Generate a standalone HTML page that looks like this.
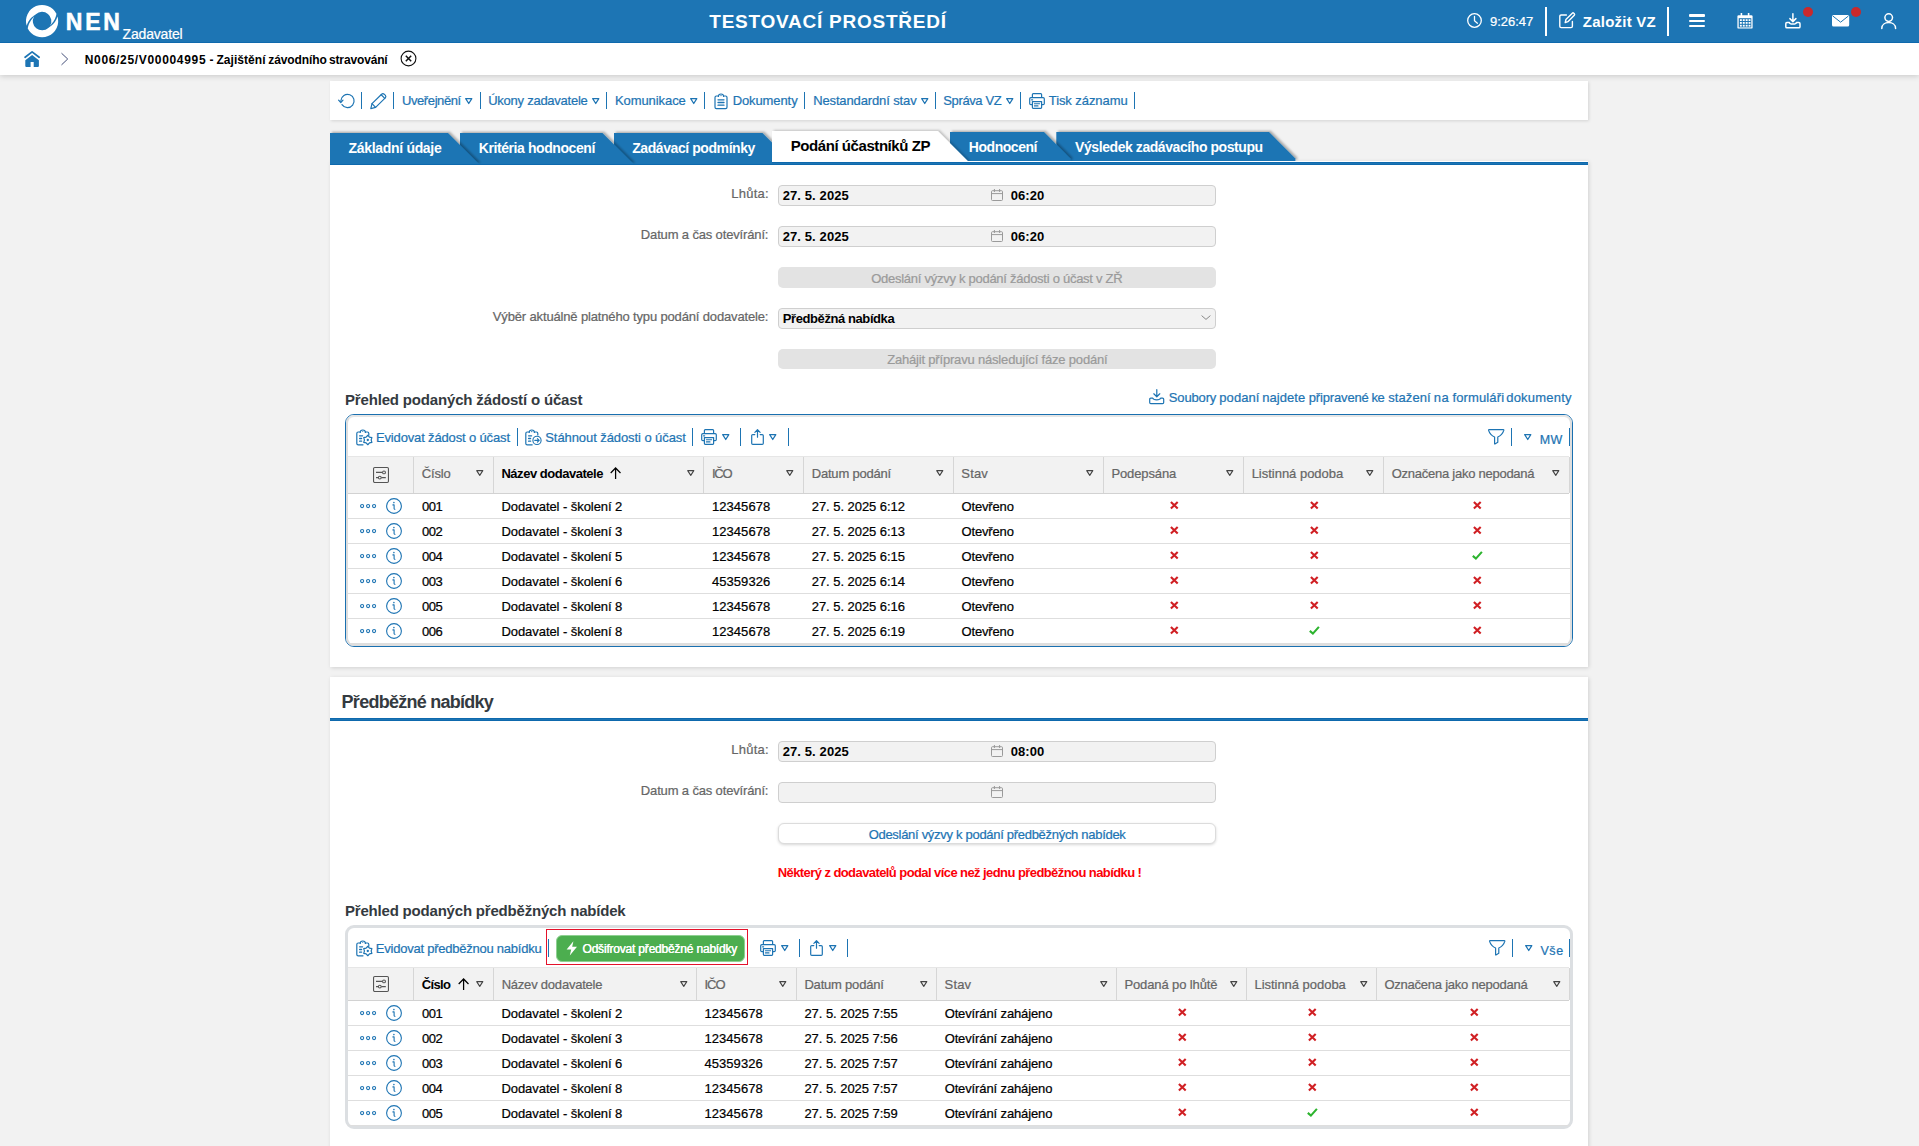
<!DOCTYPE html>
<html lang="cs"><head><meta charset="utf-8"><title>NEN - Zadavatel</title>
<style>
html,body{margin:0;padding:0;}
body{width:1919px;height:1146px;overflow:hidden;background:#f2f2f2;font-family:"Liberation Sans", sans-serif;position:relative;}
.t{position:absolute;white-space:pre;line-height:1;font-weight:400;font-family:"Liberation Sans", sans-serif;-webkit-text-stroke:0.22px currentColor;}
.b{font-weight:700;-webkit-text-stroke:0;}
</style></head><body>
<div style="position:absolute;left:0px;top:0px;width:1919px;height:43px;background:#1d75b4;"></div>
<div style="position:absolute;left:0px;top:42px;width:1919px;height:1px;background:#0e69ad;"></div>
<svg style="position:absolute;left:25.9px;top:4.8px;overflow:visible;" width="32.2" height="32.2" viewBox="0 0 32.2 32.2"><g transform="translate(16.1,16.1)" fill="#fff"><path d="M-15.40,4.71 A16.1,16.1 0 0 1 14.35,-7.31 L14.09,-5.96 L13.75,-4.70 L13.36,-3.53 L12.91,-2.44 L12.42,-1.45 L11.91,-0.54 L11.39,0.30 L10.86,1.06 L10.33,1.76 L9.82,2.40 L9.33,2.99 L8.86,3.55 L8.43,4.10 L8.05,4.65 A9.3,9.3 0 0 0 -6.22,-6.91 L-6.82,-6.44 L-7.45,-5.97 L-8.11,-5.49 L-8.80,-4.97 L-9.52,-4.39 L-10.24,-3.76 L-10.98,-3.04 L-11.71,-2.25 L-12.44,-1.35 L-13.13,-0.36 L-13.79,0.74 L-14.40,1.95 L-14.94,3.27 L-15.40,4.71 Z"/><path transform="rotate(180)" d="M-15.40,4.71 A16.1,16.1 0 0 1 14.35,-7.31 L14.09,-5.96 L13.75,-4.70 L13.36,-3.53 L12.91,-2.44 L12.42,-1.45 L11.91,-0.54 L11.39,0.30 L10.86,1.06 L10.33,1.76 L9.82,2.40 L9.33,2.99 L8.86,3.55 L8.43,4.10 L8.05,4.65 A9.3,9.3 0 0 0 -6.22,-6.91 L-6.82,-6.44 L-7.45,-5.97 L-8.11,-5.49 L-8.80,-4.97 L-9.52,-4.39 L-10.24,-3.76 L-10.98,-3.04 L-11.71,-2.25 L-12.44,-1.35 L-13.13,-0.36 L-13.79,0.74 L-14.40,1.95 L-14.94,3.27 L-15.40,4.71 Z"/></g></svg>
<span class="t b" style="left:65.75px;top:10.53px;font-size:23px;color:#fff;letter-spacing:2.769px;-webkit-text-stroke:0.55px #fff;">NEN</span>
<span class="t" style="left:122.50px;top:26.85px;font-size:14px;color:#fff;letter-spacing:-0.161px;">Zadavatel</span>
<span class="t b" style="left:709.35px;top:11.72px;font-size:19px;color:#fff;letter-spacing:0.749px;">TESTOVACÍ PROSTŘEDÍ</span>
<svg style="position:absolute;left:1467px;top:13.3px;overflow:visible;" width="15" height="15" viewBox="0 0 15 15"><circle cx="7.5" cy="7.5" r="6.8" fill="none" stroke="#fff" stroke-width="1.3"/><path d="M7.5,3.4 V7.8 L10.4,10.2" fill="none" stroke="#fff" stroke-width="1.3" stroke-linecap="round"/></svg>
<span class="t" style="left:1490.05px;top:15.00px;font-size:13px;color:#fff;letter-spacing:-0.046px;">9:26:47</span>
<div style="position:absolute;left:1545px;top:7px;width:2px;height:29px;background:#fff;"></div>
<svg style="position:absolute;left:1559.4px;top:12.4px;overflow:visible;" width="16.4" height="16.4" viewBox="0 0 16.4 16.4"><g fill="none" stroke="#fff" stroke-width="1.4" stroke-linecap="round" stroke-linejoin="round"><path d="M7.4,3 H2.2 Q0.8,3 0.8,4.4 V14.2 Q0.8,15.6 2.2,15.6 H12 Q13.4,15.6 13.4,14.2 V9.4"/><path d="M6.2,10.6 L6.9,7.6 L13.3,1.2 Q14,0.5 14.8,1.2 L15.3,1.7 Q16,2.5 15.3,3.2 L8.9,9.7 Z"/></g></svg>
<span class="t b" style="left:1582.85px;top:14.20px;font-size:15px;color:#fff;letter-spacing:0.228px;">Založit VZ</span>
<div style="position:absolute;left:1667px;top:7px;width:2px;height:29px;background:#fff;"></div>
<div style="position:absolute;left:1689px;top:14.3px;width:16px;height:2.6px;background:#fff;border-radius:1px;"></div>
<div style="position:absolute;left:1689px;top:19.5px;width:16px;height:2.6px;background:#fff;border-radius:1px;"></div>
<div style="position:absolute;left:1689px;top:24.7px;width:16px;height:2.6px;background:#fff;border-radius:1px;"></div>
<svg style="position:absolute;left:1736.8px;top:13px;overflow:visible;" width="16" height="16" viewBox="0 0 16 16"><path d="M1.6,2.2 H14.4 Q15.6,2.2 15.6,3.4 V14.4 Q15.6,15.6 14.4,15.6 H1.6 Q0.4,15.6 0.4,14.4 V3.4 Q0.4,2.2 1.6,2.2 Z" fill="#fff"/><rect x="3.6" y="0" width="1.6" height="4" fill="#fff"/><rect x="10.8" y="0" width="1.6" height="4" fill="#fff"/><rect x="1.7" y="5.2" width="12.6" height="9.2" fill="#1d75b4"/><g fill="#fff"><rect x="2.9" y="6.2" width="1.9" height="1.8"/><rect x="2.9" y="9.0" width="1.9" height="1.8"/><rect x="2.9" y="11.8" width="1.9" height="1.8"/><rect x="5.8" y="6.2" width="1.9" height="1.8"/><rect x="5.8" y="9.0" width="1.9" height="1.8"/><rect x="5.8" y="11.8" width="1.9" height="1.8"/><rect x="8.7" y="6.2" width="1.9" height="1.8"/><rect x="8.7" y="9.0" width="1.9" height="1.8"/><rect x="8.7" y="11.8" width="1.9" height="1.8"/><rect x="11.6" y="6.2" width="1.9" height="1.8"/><rect x="11.6" y="9.0" width="1.9" height="1.8"/><rect x="11.6" y="11.8" width="1.9" height="1.8"/></g><rect x="3.9" y="1.2" width="1" height="2.2" fill="#1d75b4" opacity="0"/></svg>
<svg style="position:absolute;left:1784.8px;top:13px;overflow:visible;" width="15.8" height="15.6" viewBox="0 0 15.8 15.6"><g fill="none" stroke="#fff" stroke-width="1.5" stroke-linecap="round" stroke-linejoin="round"><path d="M7.9,0.8 V8.4 M4.9,5.6 L7.9,8.6 L10.9,5.6"/><path d="M4.4,9.6 H1.9 Q0.8,9.6 0.8,10.7 V13.7 Q0.8,14.8 1.9,14.8 H13.9 Q15,14.8 15,13.7 V10.7 Q15,9.6 13.9,9.6 H11.4 C11,11.6 4.8,11.6 4.4,9.6 Z"/></g></svg>
<div style="position:absolute;left:1803px;top:7px;width:10px;height:10px;background:#c9292c;border-radius:50%;"></div>
<svg style="position:absolute;left:1832px;top:15.2px;overflow:visible;" width="17.2" height="11.6" viewBox="0 0 17.2 11.6"><rect x="0" y="0" width="17.2" height="11.6" rx="1.6" fill="#fff"/><path d="M0.8,1 L8.6,7.2 L16.4,1" fill="none" stroke="#1d75b4" stroke-width="1"/></svg>
<div style="position:absolute;left:1850.8px;top:7px;width:10px;height:10px;background:#c9292c;border-radius:50%;"></div>
<svg style="position:absolute;left:1880.8px;top:13px;overflow:visible;" width="15.4" height="16" viewBox="0 0 15.4 16"><g fill="none" stroke="#fff" stroke-width="1.5" stroke-linecap="round"><circle cx="7.7" cy="4.6" r="3.8"/><path d="M0.8,15.4 C0.8,7.6 14.6,7.6 14.6,15.4"/></g></svg>
<div style="position:absolute;left:0px;top:43px;width:1919px;height:32px;background:#fff;box-shadow:0 1px 6px rgba(0,0,0,.18);clip-path:inset(0 0 -14px 0);"></div>
<svg style="position:absolute;left:23px;top:50px;overflow:visible;" width="18" height="18" viewBox="0 0 18 18"><path d="M2.1,7.2 L9.1,1.9 L16.1,7.2" fill="none" stroke="#1d75b4" stroke-width="1.8" stroke-linecap="round" stroke-linejoin="round"/><path d="M9.1,4.9 L15.9,10.3 V15.9 Q15.9,16.9 14.9,16.9 H10.7 V12 H7.6 V16.9 H3.3 Q2.3,16.9 2.3,15.9 V10.3 Z" fill="#1d75b4"/></svg>
<svg style="position:absolute;left:60px;top:52px;overflow:visible;" width="10" height="14" viewBox="0 0 10 14"><path d="M1.5,1.2 L7.7,7 L1.5,12.9" fill="none" stroke="#3a4672" stroke-width="0.95"/></svg>
<span class="t b" style="left:84.70px;top:53.54px;font-size:12px;color:#000;letter-spacing:0.674px;">N006/25/V00004995</span>
<span class="t b" style="left:209.60px;top:53.54px;font-size:12px;color:#000;letter-spacing:1.200px;">-</span>
<span class="t b" style="left:216.40px;top:53.54px;font-size:12px;color:#000;letter-spacing:0.064px;">Zajištění</span>
<span class="t b" style="left:268.30px;top:53.54px;font-size:12px;color:#000;letter-spacing:-0.093px;">závodního</span>
<span class="t b" style="left:329.00px;top:53.54px;font-size:12px;color:#000;letter-spacing:-0.148px;">stravování</span>
<svg style="position:absolute;left:400.4px;top:50.45px;overflow:visible;" width="17" height="17" viewBox="0 0 17 17"><circle cx="8.5" cy="8.5" r="7.4" fill="none" stroke="#111" stroke-width="1.1"/><path d="M5.8,5.8 L11.2,11.2 M11.2,5.8 L5.8,11.2" stroke="#111" stroke-width="1.5" fill="none"/></svg>
<div style="position:absolute;left:330px;top:81px;width:1258px;height:39px;background:#fff;box-shadow:1px 1px 3px rgba(0,0,0,.13);"></div>
<svg style="position:absolute;left:338px;top:93px;overflow:visible;" width="16.5" height="15.5" viewBox="0 0 16.5 15.5"><g fill="none" stroke="#1d74b3" stroke-width="1.2" stroke-linecap="round" stroke-linejoin="round"><path d="M2.9,7.6 A6.6,6.6 0 1 1 4,11.6"/><path d="M0.6,7.2 L2.8,9.5 L5,7.2"/></g></svg>
<div style="position:absolute;left:361px;top:92px;width:1px;height:17px;background:#1d74b3;"></div>
<svg style="position:absolute;left:370px;top:92.8px;overflow:visible;" width="16.6" height="16.4" viewBox="0 0 16.6 16.4"><g fill="none" stroke="#1d74b3" stroke-width="1.2" stroke-linecap="round" stroke-linejoin="round"><path d="M0.8,15.6 L2,10.6 L11.6,1.2 Q12.9,0.1 14.2,1.2 L15.4,2.4 Q16.4,3.7 15.3,4.9 L5.6,14.4 Z"/><path d="M2,10.6 L5.6,14.4 M11.2,1.8 L14.8,5.4"/></g></svg>
<div style="position:absolute;left:393px;top:92px;width:1px;height:17px;background:#1d74b3;"></div>
<span class="t" style="left:401.95px;top:93.60px;font-size:13px;color:#1d74b3;letter-spacing:-0.397px;">Uveřejnění</span>
<svg style="position:absolute;left:465.3px;top:97.6px;overflow:visible;" width="7.5" height="6.1" viewBox="0 0 7.5 6.1"><path d="M0.7,0.6 H6.8 L3.75,5.5 Z" fill="none" stroke="#1d74b3" stroke-width="1.25" stroke-linejoin="round"/></svg>
<div style="position:absolute;left:480px;top:92px;width:1px;height:17px;background:#1d74b3;"></div>
<span class="t" style="left:488.15px;top:93.60px;font-size:13px;color:#1d74b3;letter-spacing:-0.243px;">Úkony zadavatele</span>
<svg style="position:absolute;left:591.6px;top:97.6px;overflow:visible;" width="7.5" height="6.1" viewBox="0 0 7.5 6.1"><path d="M0.7,0.6 H6.8 L3.75,5.5 Z" fill="none" stroke="#1d74b3" stroke-width="1.25" stroke-linejoin="round"/></svg>
<div style="position:absolute;left:606px;top:92px;width:1px;height:17px;background:#1d74b3;"></div>
<span class="t" style="left:614.95px;top:93.60px;font-size:13px;color:#1d74b3;letter-spacing:-0.072px;">Komunikace</span>
<svg style="position:absolute;left:689.5px;top:97.6px;overflow:visible;" width="7.5" height="6.1" viewBox="0 0 7.5 6.1"><path d="M0.7,0.6 H6.8 L3.75,5.5 Z" fill="none" stroke="#1d74b3" stroke-width="1.25" stroke-linejoin="round"/></svg>
<div style="position:absolute;left:704px;top:92px;width:1px;height:17px;background:#1d74b3;"></div>
<svg style="position:absolute;left:714.4px;top:92.8px;overflow:visible;" width="14" height="16" viewBox="0 0 14 16"><g fill="none" stroke="#1d74b3" stroke-width="1.2" stroke-linecap="round" stroke-linejoin="round"><path d="M4.4,3 H2.4 Q1,3 1,4.4 V14.2 Q1,15.6 2.4,15.6 H11.6 Q13,15.6 13,14.2 V4.4 Q13,3 11.6,3 H9.6"/><path d="M4.4,3.4 C4.4,0.2 9.6,0.2 9.6,3.4"/><path d="M4,6.8 H10 M4,9.5 H10 M4,12.2 H10" stroke-width="1.3"/></g><circle cx="7" cy="2.6" r="0.7" fill="#1d74b3"/></svg>
<span class="t" style="left:732.65px;top:93.60px;font-size:13px;color:#1d74b3;letter-spacing:-0.094px;">Dokumenty</span>
<div style="position:absolute;left:804px;top:92px;width:1px;height:17px;background:#1d74b3;"></div>
<span class="t" style="left:813.15px;top:93.60px;font-size:13px;color:#1d74b3;letter-spacing:-0.126px;">Nestandardní stav</span>
<svg style="position:absolute;left:920.6px;top:97.6px;overflow:visible;" width="7.5" height="6.1" viewBox="0 0 7.5 6.1"><path d="M0.7,0.6 H6.8 L3.75,5.5 Z" fill="none" stroke="#1d74b3" stroke-width="1.25" stroke-linejoin="round"/></svg>
<div style="position:absolute;left:935px;top:92px;width:1px;height:17px;background:#1d74b3;"></div>
<span class="t" style="left:943.35px;top:93.60px;font-size:13px;color:#1d74b3;letter-spacing:-0.390px;">Správa VZ</span>
<svg style="position:absolute;left:1005.8px;top:97.6px;overflow:visible;" width="7.5" height="6.1" viewBox="0 0 7.5 6.1"><path d="M0.7,0.6 H6.8 L3.75,5.5 Z" fill="none" stroke="#1d74b3" stroke-width="1.25" stroke-linejoin="round"/></svg>
<div style="position:absolute;left:1020px;top:92px;width:1px;height:17px;background:#1d74b3;"></div>
<svg style="position:absolute;left:1029.2px;top:92.7px;overflow:visible;" width="16" height="16" viewBox="0 0 16 16"><g fill="none" stroke="#1d74b3" stroke-width="1.2" stroke-linejoin="round" stroke-linecap="round"><path d="M3.4,4.4 V1.6 Q3.4,0.7 4.3,0.7 H11.7 Q12.6,0.7 12.6,1.6 V4.4"/><path d="M3.4,11.6 H1.9 Q0.7,11.6 0.7,10.4 V5.8 Q0.7,4.6 1.9,4.6 H14.1 Q15.3,4.6 15.3,5.8 V10.4 Q15.3,11.6 14.1,11.6 H12.6"/><path d="M3.4,8.6 H12.6 V14.6 Q12.6,15.4 11.8,15.4 H4.2 Q3.4,15.4 3.4,14.6 Z"/><path d="M5.4,10.8 H10.6 M5.4,12.9 H9" stroke-width="1.1"/><path d="M2.6,6.8 H3.6" stroke-width="1.2"/></g></svg>
<span class="t" style="left:1048.75px;top:93.60px;font-size:13px;color:#1d74b3;letter-spacing:-0.074px;">Tisk záznamu</span>
<div style="position:absolute;left:1134px;top:92px;width:1px;height:17px;background:#1d74b3;"></div>
<div style="position:absolute;left:330px;top:161px;width:1258px;height:506px;background:#fff;box-shadow:1px 1px 4px rgba(0,0,0,.14);"></div>
<div style="position:absolute;left:330px;top:162px;width:1258px;height:3px;background:linear-gradient(#0e69ad 0 1px,#1d75b4 1px 2px,#0e69ad 2px 3px);"></div>
<svg style="position:absolute;left:0;top:0;overflow:hidden" width="1919" height="164" viewBox="0 0 1919 164"><defs><filter id="tsh" x="-5%" y="-30%" width="115%" height="160%"><feDropShadow dx="1.8" dy="-1.2" stdDeviation="1.1" flood-color="#000" flood-opacity="0.3"/></filter><filter id="tsw" x="-5%" y="-30%" width="115%" height="160%"><feDropShadow dx="1.8" dy="-1.0" stdDeviation="1.2" flood-color="#000" flood-opacity="0.2"/></filter></defs><path d="M1056.3,132 H1269 L1295.4,158.4 V161 H1056.3 Z" fill="#1d75b4" filter="url(#tsh)"/><path d="M950,132 H1044 L1070.4,158.4 V161 H950 Z" fill="#1d75b4" filter="url(#tsh)"/><path d="M614,133 H762.5 L793.5,164 V164 H614 Z" fill="#1d75b4" filter="url(#tsh)"/><path d="M460,133 H602.5 L633.5,164 V164 H460 Z" fill="#1d75b4" filter="url(#tsh)"/><path d="M330,133 H448 L479,164 V164 H330 Z" fill="#1d75b4" filter="url(#tsh)"/><path d="M772,131 H937.8 L967.8,161 V162 H772 Z" fill="#fff" filter="url(#tsw)"/></svg>
<div style="position:absolute;left:950px;top:161px;width:346px;height:1px;background:#fff;"></div>
<div style="position:absolute;left:772px;top:162px;width:816px;height:3px;background:linear-gradient(#0e69ad 0 1px,#1d75b4 1px 2px,#0e69ad 2px 3px);"></div>
<span class="t b" style="left:348.60px;top:141.25px;font-size:14px;color:#fff;letter-spacing:-0.319px;">Základní údaje</span>
<span class="t b" style="left:478.80px;top:141.25px;font-size:14px;color:#fff;letter-spacing:-0.423px;">Kritéria hodnocení</span>
<span class="t b" style="left:632.20px;top:141.25px;font-size:14px;color:#fff;letter-spacing:-0.421px;">Zadávací podmínky</span>
<span class="t b" style="left:790.75px;top:138.20px;font-size:15px;color:#000;letter-spacing:-0.435px;">Podání účastníků ZP</span>
<span class="t b" style="left:968.80px;top:140.45px;font-size:14px;color:#fff;letter-spacing:-0.455px;">Hodnocení</span>
<span class="t b" style="left:1075.10px;top:140.45px;font-size:14px;color:#fff;letter-spacing:-0.430px;">Výsledek zadávacího postupu</span>
<span class="t" style="left:731.15px;top:187.20px;font-size:13px;color:#666;letter-spacing:0.269px;">Lhůta:</span>
<div style="position:absolute;left:778px;top:185px;width:438px;height:21px;background:#f2f2f2;border:1px solid #cfcfcf;border-radius:4px;box-sizing:border-box;"></div><svg style="position:absolute;left:991px;top:189.3px;overflow:visible;" width="12" height="12" viewBox="0 0 12 12"><g fill="none" stroke="#9a9a9a" stroke-width="1"><rect x="0.5" y="1.7" width="11" height="9.8" rx="1"/><path d="M0.5,4.6 H11.5 M3.4,0 V3 M8.6,0 V3"/></g></svg><span class="t b" style="left:782.65px;top:189.00px;font-size:13px;color:#000;letter-spacing:0.114px;">27. 5. 2025</span><span class="t b" style="left:1010.75px;top:189.00px;font-size:13px;color:#000;letter-spacing:0.062px;">06:20</span>
<span class="t" style="left:640.85px;top:228.20px;font-size:13px;color:#666;letter-spacing:-0.151px;">Datum a čas otevírání:</span>
<div style="position:absolute;left:778px;top:226px;width:438px;height:21px;background:#f2f2f2;border:1px solid #cfcfcf;border-radius:4px;box-sizing:border-box;"></div><svg style="position:absolute;left:991px;top:230.3px;overflow:visible;" width="12" height="12" viewBox="0 0 12 12"><g fill="none" stroke="#9a9a9a" stroke-width="1"><rect x="0.5" y="1.7" width="11" height="9.8" rx="1"/><path d="M0.5,4.6 H11.5 M3.4,0 V3 M8.6,0 V3"/></g></svg><span class="t b" style="left:782.65px;top:230.00px;font-size:13px;color:#000;letter-spacing:0.114px;">27. 5. 2025</span><span class="t b" style="left:1010.75px;top:230.00px;font-size:13px;color:#000;letter-spacing:0.062px;">06:20</span>
<div style="position:absolute;left:778px;top:267px;width:438px;height:21px;background:#e3e3e3;border-radius:5px;"></div>
<span class="t" style="left:871.25px;top:272.10px;font-size:13px;color:#9a9a9a;letter-spacing:-0.270px;">Odeslání výzvy k podání žádosti o účast v ZŘ</span>
<span class="t" style="left:492.85px;top:310.20px;font-size:13px;color:#666;letter-spacing:-0.152px;">Výběr aktuálně platného typu podání dodavatele:</span>
<div style="position:absolute;left:778px;top:308px;width:438px;height:21px;background:#f2f2f2;border:1px solid #cfcfcf;border-radius:4px;box-sizing:border-box;"></div>
<span class="t b" style="left:782.85px;top:311.80px;font-size:13px;color:#000;letter-spacing:-0.418px;">Předběžná nabídka</span>
<svg style="position:absolute;left:1200.5px;top:315.4px;overflow:visible;" width="10" height="5.4" viewBox="0 0 10 5.4"><path d="M0.6,0.6 L5,4.4 L9.4,0.6" fill="none" stroke="#888" stroke-width="1"/></svg>
<div style="position:absolute;left:778px;top:349px;width:438px;height:20px;background:#e3e3e3;border-radius:5px;"></div>
<span class="t" style="left:887.15px;top:353.00px;font-size:13px;color:#9a9a9a;letter-spacing:-0.183px;">Zahájit přípravu následující fáze podání</span>
<span class="t b" style="left:344.95px;top:392.00px;font-size:15px;color:#343a40;letter-spacing:-0.163px;">Přehled podaných žádostí o účast</span>
<svg style="position:absolute;left:1149.3px;top:389.2px;overflow:visible;" width="15.4" height="15.2" viewBox="0 0 15.4 15.2"><g fill="none" stroke="#1d74b3" stroke-width="1.2" stroke-linecap="round" stroke-linejoin="round"><path d="M7.8,0.6 V7.4 M4.8,4.8 L7.8,7.8 L10.8,4.8"/><path d="M3.8,9.2 H1.8 Q0.7,9.2 0.7,10.3 V13.5 Q0.7,14.6 1.8,14.6 H13.6 Q14.7,14.6 14.7,13.5 V10.3 Q14.7,9.2 13.6,9.2 H11.6 C11,11.4 4.4,11.4 3.8,9.2 Z"/></g></svg>
<span class="t" style="left:1168.85px;top:391.00px;font-size:13px;color:#1d74b3;letter-spacing:-0.154px;">Soubory</span>
<span class="t" style="left:1219.25px;top:391.00px;font-size:13px;color:#1d74b3;letter-spacing:0.087px;">podaní</span>
<span class="t" style="left:1262.15px;top:391.00px;font-size:13px;color:#1d74b3;letter-spacing:0.074px;">najdete</span>
<span class="t" style="left:1308.65px;top:391.00px;font-size:13px;color:#1d74b3;letter-spacing:-0.137px;">připravené</span>
<span class="t" style="left:1371.55px;top:391.00px;font-size:13px;color:#1d74b3;letter-spacing:-0.434px;">ke</span>
<span class="t" style="left:1388.15px;top:391.00px;font-size:13px;color:#1d74b3;letter-spacing:0.113px;">stažení</span>
<span class="t" style="left:1433.65px;top:391.00px;font-size:13px;color:#1d74b3;letter-spacing:0.531px;">na</span>
<span class="t" style="left:1452.45px;top:391.00px;font-size:13px;color:#1d74b3;letter-spacing:0.128px;">formuláři</span>
<span class="t" style="left:1506.25px;top:391.00px;font-size:13px;color:#1d74b3;letter-spacing:0.201px;">dokumenty</span>
<div style="position:absolute;left:345px;top:414px;width:1228px;height:233px;border:1px solid #1a70b0;border-radius:9px;box-sizing:border-box;background:#fff;"></div><div style="position:absolute;left:346px;top:415px;width:1226px;height:231px;border:2px solid #dedede;border-top-color:#e6e6e6;border-radius:8px;box-sizing:border-box;"></div><svg style="position:absolute;left:356px;top:429px;overflow:visible;" width="16" height="16" viewBox="0 0 16 16"><g fill="none" stroke="#1d74b3" stroke-width="1.2" stroke-linecap="round" stroke-linejoin="round"><path d="M4.2,3 H2.2 Q0.8,3 0.8,4.4 V14.4 Q0.8,15.8 2.2,15.8 H7"/><path d="M9.4,3 H11.4 Q12.8,3 12.8,4.4 V6.2"/><path d="M4.2,3.4 C4.2,0.2 9.4,0.2 9.4,3.4"/><path d="M3.6,6.8 H6.6 M3.6,9.5 H5.6 M3.6,12.2 H5.6" stroke-width="1.3"/><path d="M11.80,6.25 L13.48,8.10 L15.91,8.62 L15.15,11.00 L15.91,13.38 L13.48,13.90 L11.80,15.75 L10.13,13.90 L7.69,13.38 L8.45,11.00 L7.69,8.62 L10.12,8.10 Z" stroke-width="1.15"/></g><circle cx="6.8" cy="2.5" r="0.55" fill="#1d74b3"/><circle cx="11.8" cy="11" r="1.15" fill="#1d74b3"/></svg><span class="t" style="left:375.95px;top:430.90px;font-size:13px;color:#1d74b3;letter-spacing:-0.146px;">Evidovat žádost o účast</span><div style="position:absolute;left:517px;top:428px;width:1px;height:18px;background:#1d74b3;"></div><svg style="position:absolute;left:525.4px;top:429px;overflow:visible;" width="17" height="16" viewBox="0 0 17 16"><g fill="none" stroke="#1d74b3" stroke-width="1.2" stroke-linecap="round" stroke-linejoin="round"><path d="M4.2,3 H2.2 Q0.8,3 0.8,4.4 V14.4 Q0.8,15.8 2.2,15.8 H7.2"/><path d="M9.4,3 H11.4 Q12.8,3 12.8,4.4 V6"/><path d="M4.2,3.4 C4.2,0.2 9.4,0.2 9.4,3.4"/><path d="M3.6,6.8 H6.6 M3.6,9.5 H5.6 M3.6,12.2 H5.6" stroke-width="1.3"/><circle cx="12" cy="11.4" r="4.1" stroke-width="1.1"/><path d="M9.8,11.4 H14 M12.4,9.6 L14.2,11.4 L12.4,13.2" stroke-width="1.1"/></g><circle cx="6.8" cy="2.6" r="0.7" fill="#1d74b3"/></svg><span class="t" style="left:545.25px;top:430.90px;font-size:13px;color:#1d74b3;letter-spacing:-0.077px;">Stáhnout žádosti o účast</span><div style="position:absolute;left:692px;top:428px;width:1px;height:18px;background:#1d74b3;"></div><svg style="position:absolute;left:701.4px;top:428.7px;overflow:visible;" width="16" height="16" viewBox="0 0 16 16"><g fill="none" stroke="#1d74b3" stroke-width="1.2" stroke-linejoin="round" stroke-linecap="round"><path d="M3.4,4.4 V1.6 Q3.4,0.7 4.3,0.7 H11.7 Q12.6,0.7 12.6,1.6 V4.4"/><path d="M3.4,11.6 H1.9 Q0.7,11.6 0.7,10.4 V5.8 Q0.7,4.6 1.9,4.6 H14.1 Q15.3,4.6 15.3,5.8 V10.4 Q15.3,11.6 14.1,11.6 H12.6"/><path d="M3.4,8.6 H12.6 V14.6 Q12.6,15.4 11.8,15.4 H4.2 Q3.4,15.4 3.4,14.6 Z"/><path d="M5.4,10.8 H10.6 M5.4,12.9 H9" stroke-width="1.1"/><path d="M2.6,6.8 H3.6" stroke-width="1.2"/></g></svg><svg style="position:absolute;left:721.5px;top:434.3px;overflow:visible;" width="7.5" height="6.1" viewBox="0 0 7.5 6.1"><path d="M0.7,0.6 H6.8 L3.75,5.5 Z" fill="none" stroke="#1d74b3" stroke-width="1.25" stroke-linejoin="round"/></svg><div style="position:absolute;left:740px;top:428px;width:1px;height:18px;background:#1d74b3;"></div><svg style="position:absolute;left:751px;top:428.7px;overflow:visible;" width="13" height="16" viewBox="0 0 13 16"><g fill="none" stroke="#1d74b3" stroke-width="1.2" stroke-linejoin="round" stroke-linecap="round"><path d="M3.8,5.6 H1.8 Q0.7,5.6 0.7,6.7 V14.3 Q0.7,15.4 1.8,15.4 H11.2 Q12.3,15.4 12.3,14.3 V6.7 Q12.3,5.6 11.2,5.6 H9.2"/><path d="M6.5,8.2 V0.8 M3.9,3.3 L6.5,0.7 L9.1,3.3"/></g></svg><svg style="position:absolute;left:769.4px;top:434.3px;overflow:visible;" width="7.5" height="6.1" viewBox="0 0 7.5 6.1"><path d="M0.7,0.6 H6.8 L3.75,5.5 Z" fill="none" stroke="#1d74b3" stroke-width="1.25" stroke-linejoin="round"/></svg><div style="position:absolute;left:788px;top:428px;width:1px;height:18px;background:#1d74b3;"></div><svg style="position:absolute;left:1487.7px;top:429px;overflow:visible;" width="16.4" height="15.6" viewBox="0 0 16.4 15.6"><path d="M1,0.7 H15.4 Q16,0.7 15.8,1.4 C14.6,5.2 12.4,7 9.8,8 V13.2 L6.9,15 Q6.6,15.1 6.6,14.7 V8 C4,7 1.8,5.2 0.6,1.4 Q0.4,0.7 1,0.7 Z" fill="none" stroke="#1d74b3" stroke-width="1.2" stroke-linejoin="round"/></svg><div style="position:absolute;left:1511px;top:428px;width:1px;height:18px;background:#1d74b3;"></div><svg style="position:absolute;left:1524px;top:434.3px;overflow:visible;" width="7.5" height="6.1" viewBox="0 0 7.5 6.1"><path d="M0.7,0.6 H6.8 L3.75,5.5 Z" fill="none" stroke="#1d74b3" stroke-width="1.25" stroke-linejoin="round"/></svg><span class="t" style="left:1539.67px;top:434.12px;font-size:12.5px;color:#1d74b3;letter-spacing:0.531px;">MW</span><div style="position:absolute;left:1569px;top:428px;width:1px;height:18px;background:#1d74b3;"></div><div style="position:absolute;left:348px;top:456px;width:1221px;height:1px;background:#e6e6e6;"></div><div style="position:absolute;left:348px;top:457px;width:1221px;height:36px;background:#f2f2f2;"></div><div style="position:absolute;left:348px;top:493px;width:1221px;height:1px;background:#d2d2d2;"></div><div style="position:absolute;left:413px;top:457px;width:1px;height:36px;background:#d6d6d6;"></div><div style="position:absolute;left:493px;top:457px;width:1px;height:36px;background:#d6d6d6;"></div><div style="position:absolute;left:703px;top:457px;width:1px;height:36px;background:#d6d6d6;"></div><div style="position:absolute;left:803px;top:457px;width:1px;height:36px;background:#d6d6d6;"></div><div style="position:absolute;left:953px;top:457px;width:1px;height:36px;background:#d6d6d6;"></div><div style="position:absolute;left:1103px;top:457px;width:1px;height:36px;background:#d6d6d6;"></div><div style="position:absolute;left:1243px;top:457px;width:1px;height:36px;background:#d6d6d6;"></div><div style="position:absolute;left:1383px;top:457px;width:1px;height:36px;background:#d6d6d6;"></div><div style="position:absolute;left:1569px;top:457px;width:1px;height:36px;background:#d6d6d6;"></div><svg style="position:absolute;left:373px;top:467.0px;overflow:visible;" width="16" height="16" viewBox="0 0 16 16"><g fill="none" stroke="#555" stroke-width="1.1"><rect x="0.55" y="0.55" width="14.9" height="14.9" rx="1.2"/><path d="M3,5.4 H9.6 M12.4,5.4 H12.8 M3,10.6 H5.4 M8.2,10.6 H12.8"/><circle cx="11" cy="5.4" r="1.4" fill="#fff"/><circle cx="6.8" cy="10.6" r="1.4" fill="#fff"/></g></svg><span class="t" style="left:421.85px;top:466.70px;font-size:13px;color:#666;letter-spacing:-0.206px;">Číslo</span><svg style="position:absolute;left:476.4px;top:470.0px;overflow:visible;" width="7.5" height="6" viewBox="0 0 7.5 6"><path d="M0.7,0.6 H6.8 L3.75,5.4 Z" fill="none" stroke="#444" stroke-width="1.1" stroke-linejoin="round"/></svg><span class="t b" style="left:501.45px;top:466.70px;font-size:13px;color:#000;letter-spacing:-0.474px;">Název dodavatele</span><svg style="position:absolute;left:609.8px;top:467.2px;overflow:visible;" width="11.2" height="12" viewBox="0 0 11.2 12"><path d="M5.6,12 V1 M0.7,6 L5.6,1 L10.5,6" fill="none" stroke="#000" stroke-width="1.25"/></svg><svg style="position:absolute;left:686.6px;top:470.0px;overflow:visible;" width="7.5" height="6" viewBox="0 0 7.5 6"><path d="M0.7,0.6 H6.8 L3.75,5.4 Z" fill="none" stroke="#444" stroke-width="1.1" stroke-linejoin="round"/></svg><span class="t" style="left:711.95px;top:466.70px;font-size:13px;color:#666;letter-spacing:-1.213px;">IČO</span><svg style="position:absolute;left:786.4px;top:470.0px;overflow:visible;" width="7.5" height="6" viewBox="0 0 7.5 6"><path d="M0.7,0.6 H6.8 L3.75,5.4 Z" fill="none" stroke="#444" stroke-width="1.1" stroke-linejoin="round"/></svg><span class="t" style="left:811.75px;top:466.70px;font-size:13px;color:#666;letter-spacing:-0.207px;">Datum podání</span><svg style="position:absolute;left:936.3px;top:470.0px;overflow:visible;" width="7.5" height="6" viewBox="0 0 7.5 6"><path d="M0.7,0.6 H6.8 L3.75,5.4 Z" fill="none" stroke="#444" stroke-width="1.1" stroke-linejoin="round"/></svg><span class="t" style="left:961.35px;top:466.70px;font-size:13px;color:#666;letter-spacing:0.161px;">Stav</span><svg style="position:absolute;left:1086.4px;top:470.0px;overflow:visible;" width="7.5" height="6" viewBox="0 0 7.5 6"><path d="M0.7,0.6 H6.8 L3.75,5.4 Z" fill="none" stroke="#444" stroke-width="1.1" stroke-linejoin="round"/></svg><span class="t" style="left:1111.45px;top:466.70px;font-size:13px;color:#666;letter-spacing:-0.123px;">Podepsána</span><svg style="position:absolute;left:1226.3px;top:470.0px;overflow:visible;" width="7.5" height="6" viewBox="0 0 7.5 6"><path d="M0.7,0.6 H6.8 L3.75,5.4 Z" fill="none" stroke="#444" stroke-width="1.1" stroke-linejoin="round"/></svg><span class="t" style="left:1251.65px;top:466.70px;font-size:13px;color:#666;letter-spacing:-0.015px;">Listinná podoba</span><svg style="position:absolute;left:1366.2px;top:470.0px;overflow:visible;" width="7.5" height="6" viewBox="0 0 7.5 6"><path d="M0.7,0.6 H6.8 L3.75,5.4 Z" fill="none" stroke="#444" stroke-width="1.1" stroke-linejoin="round"/></svg><span class="t" style="left:1391.75px;top:466.70px;font-size:13px;color:#666;letter-spacing:-0.257px;">Označena jako nepodaná</span><svg style="position:absolute;left:1552.4px;top:470.0px;overflow:visible;" width="7.5" height="6" viewBox="0 0 7.5 6"><path d="M0.7,0.6 H6.8 L3.75,5.4 Z" fill="none" stroke="#444" stroke-width="1.1" stroke-linejoin="round"/></svg><div style="position:absolute;left:348px;top:518px;width:1222px;height:1px;background:#dedede;"></div><svg style="position:absolute;left:360px;top:503.9px;overflow:visible;" width="16.2" height="4.2" viewBox="0 0 16.2 4.2"><circle cx="2.1" cy="2.1" r="1.55" fill="none" stroke="#1d74b3" stroke-width="1.1"/><circle cx="8.1" cy="2.1" r="1.55" fill="none" stroke="#1d74b3" stroke-width="1.1"/><circle cx="14.1" cy="2.1" r="1.55" fill="none" stroke="#1d74b3" stroke-width="1.1"/></svg><svg style="position:absolute;left:386px;top:498px;overflow:visible;" width="16" height="16" viewBox="0 0 16 16"><circle cx="8" cy="8" r="7.4" fill="none" stroke="#1d74b3" stroke-width="1.1"/><circle cx="7.9" cy="4.6" r="0.8" fill="#1d74b3"/><path d="M6.9,6.9 H8.1 V10.6 Q8.1,11.4 9,11.3" fill="none" stroke="#1d74b3" stroke-width="1.1" stroke-linecap="round" stroke-linejoin="round"/></svg><span class="t" style="left:421.95px;top:499.60px;font-size:13px;color:#000;letter-spacing:-0.502px;">001</span><span class="t" style="left:501.45px;top:499.60px;font-size:13px;color:#000;letter-spacing:-0.061px;">Dodavatel - školení 2</span><span class="t" style="left:711.95px;top:499.60px;font-size:13px;color:#000;letter-spacing:0.065px;">12345678</span><span class="t" style="left:811.75px;top:499.60px;font-size:13px;color:#000;letter-spacing:-0.046px;">27. 5. 2025 6:12</span><span class="t" style="left:961.45px;top:499.60px;font-size:13px;color:#000;letter-spacing:-0.141px;">Otevřeno</span><svg style="position:absolute;left:1170.1000000000001px;top:500.8px;overflow:visible;" width="8.6" height="8.4" viewBox="0 0 8.6 8.4"><path d="M0.9,0.9 L7.7,7.5 M7.7,0.9 L0.9,7.5" stroke="#d01f23" stroke-width="2.1" fill="none"/></svg><svg style="position:absolute;left:1310.1000000000001px;top:500.8px;overflow:visible;" width="8.6" height="8.4" viewBox="0 0 8.6 8.4"><path d="M0.9,0.9 L7.7,7.5 M7.7,0.9 L0.9,7.5" stroke="#d01f23" stroke-width="2.1" fill="none"/></svg><svg style="position:absolute;left:1473.1000000000001px;top:500.8px;overflow:visible;" width="8.6" height="8.4" viewBox="0 0 8.6 8.4"><path d="M0.9,0.9 L7.7,7.5 M7.7,0.9 L0.9,7.5" stroke="#d01f23" stroke-width="2.1" fill="none"/></svg><div style="position:absolute;left:348px;top:543px;width:1222px;height:1px;background:#dedede;"></div><svg style="position:absolute;left:360px;top:528.9px;overflow:visible;" width="16.2" height="4.2" viewBox="0 0 16.2 4.2"><circle cx="2.1" cy="2.1" r="1.55" fill="none" stroke="#1d74b3" stroke-width="1.1"/><circle cx="8.1" cy="2.1" r="1.55" fill="none" stroke="#1d74b3" stroke-width="1.1"/><circle cx="14.1" cy="2.1" r="1.55" fill="none" stroke="#1d74b3" stroke-width="1.1"/></svg><svg style="position:absolute;left:386px;top:523px;overflow:visible;" width="16" height="16" viewBox="0 0 16 16"><circle cx="8" cy="8" r="7.4" fill="none" stroke="#1d74b3" stroke-width="1.1"/><circle cx="7.9" cy="4.6" r="0.8" fill="#1d74b3"/><path d="M6.9,6.9 H8.1 V10.6 Q8.1,11.4 9,11.3" fill="none" stroke="#1d74b3" stroke-width="1.1" stroke-linecap="round" stroke-linejoin="round"/></svg><span class="t" style="left:421.95px;top:524.60px;font-size:13px;color:#000;letter-spacing:-0.502px;">002</span><span class="t" style="left:501.45px;top:524.60px;font-size:13px;color:#000;letter-spacing:-0.061px;">Dodavatel - školení 3</span><span class="t" style="left:711.95px;top:524.60px;font-size:13px;color:#000;letter-spacing:0.065px;">12345678</span><span class="t" style="left:811.75px;top:524.60px;font-size:13px;color:#000;letter-spacing:-0.046px;">27. 5. 2025 6:13</span><span class="t" style="left:961.45px;top:524.60px;font-size:13px;color:#000;letter-spacing:-0.141px;">Otevřeno</span><svg style="position:absolute;left:1170.1000000000001px;top:525.8px;overflow:visible;" width="8.6" height="8.4" viewBox="0 0 8.6 8.4"><path d="M0.9,0.9 L7.7,7.5 M7.7,0.9 L0.9,7.5" stroke="#d01f23" stroke-width="2.1" fill="none"/></svg><svg style="position:absolute;left:1310.1000000000001px;top:525.8px;overflow:visible;" width="8.6" height="8.4" viewBox="0 0 8.6 8.4"><path d="M0.9,0.9 L7.7,7.5 M7.7,0.9 L0.9,7.5" stroke="#d01f23" stroke-width="2.1" fill="none"/></svg><svg style="position:absolute;left:1473.1000000000001px;top:525.8px;overflow:visible;" width="8.6" height="8.4" viewBox="0 0 8.6 8.4"><path d="M0.9,0.9 L7.7,7.5 M7.7,0.9 L0.9,7.5" stroke="#d01f23" stroke-width="2.1" fill="none"/></svg><div style="position:absolute;left:348px;top:568px;width:1222px;height:1px;background:#dedede;"></div><svg style="position:absolute;left:360px;top:553.9px;overflow:visible;" width="16.2" height="4.2" viewBox="0 0 16.2 4.2"><circle cx="2.1" cy="2.1" r="1.55" fill="none" stroke="#1d74b3" stroke-width="1.1"/><circle cx="8.1" cy="2.1" r="1.55" fill="none" stroke="#1d74b3" stroke-width="1.1"/><circle cx="14.1" cy="2.1" r="1.55" fill="none" stroke="#1d74b3" stroke-width="1.1"/></svg><svg style="position:absolute;left:386px;top:548px;overflow:visible;" width="16" height="16" viewBox="0 0 16 16"><circle cx="8" cy="8" r="7.4" fill="none" stroke="#1d74b3" stroke-width="1.1"/><circle cx="7.9" cy="4.6" r="0.8" fill="#1d74b3"/><path d="M6.9,6.9 H8.1 V10.6 Q8.1,11.4 9,11.3" fill="none" stroke="#1d74b3" stroke-width="1.1" stroke-linecap="round" stroke-linejoin="round"/></svg><span class="t" style="left:421.95px;top:549.60px;font-size:13px;color:#000;letter-spacing:-0.502px;">004</span><span class="t" style="left:501.45px;top:549.60px;font-size:13px;color:#000;letter-spacing:-0.061px;">Dodavatel - školení 5</span><span class="t" style="left:711.95px;top:549.60px;font-size:13px;color:#000;letter-spacing:0.065px;">12345678</span><span class="t" style="left:811.75px;top:549.60px;font-size:13px;color:#000;letter-spacing:-0.046px;">27. 5. 2025 6:15</span><span class="t" style="left:961.45px;top:549.60px;font-size:13px;color:#000;letter-spacing:-0.141px;">Otevřeno</span><svg style="position:absolute;left:1170.1000000000001px;top:550.8px;overflow:visible;" width="8.6" height="8.4" viewBox="0 0 8.6 8.4"><path d="M0.9,0.9 L7.7,7.5 M7.7,0.9 L0.9,7.5" stroke="#d01f23" stroke-width="2.1" fill="none"/></svg><svg style="position:absolute;left:1310.1000000000001px;top:550.8px;overflow:visible;" width="8.6" height="8.4" viewBox="0 0 8.6 8.4"><path d="M0.9,0.9 L7.7,7.5 M7.7,0.9 L0.9,7.5" stroke="#d01f23" stroke-width="2.1" fill="none"/></svg><svg style="position:absolute;left:1472.1000000000001px;top:550.8px;overflow:visible;" width="10.6" height="8.4" viewBox="0 0 10.6 8.4"><path d="M0.8,4.9 L3.9,7.6 L9.9,0.9" stroke="#2db42f" stroke-width="2.1" fill="none"/></svg><div style="position:absolute;left:348px;top:593px;width:1222px;height:1px;background:#dedede;"></div><svg style="position:absolute;left:360px;top:578.9px;overflow:visible;" width="16.2" height="4.2" viewBox="0 0 16.2 4.2"><circle cx="2.1" cy="2.1" r="1.55" fill="none" stroke="#1d74b3" stroke-width="1.1"/><circle cx="8.1" cy="2.1" r="1.55" fill="none" stroke="#1d74b3" stroke-width="1.1"/><circle cx="14.1" cy="2.1" r="1.55" fill="none" stroke="#1d74b3" stroke-width="1.1"/></svg><svg style="position:absolute;left:386px;top:573px;overflow:visible;" width="16" height="16" viewBox="0 0 16 16"><circle cx="8" cy="8" r="7.4" fill="none" stroke="#1d74b3" stroke-width="1.1"/><circle cx="7.9" cy="4.6" r="0.8" fill="#1d74b3"/><path d="M6.9,6.9 H8.1 V10.6 Q8.1,11.4 9,11.3" fill="none" stroke="#1d74b3" stroke-width="1.1" stroke-linecap="round" stroke-linejoin="round"/></svg><span class="t" style="left:421.95px;top:574.60px;font-size:13px;color:#000;letter-spacing:-0.502px;">003</span><span class="t" style="left:501.45px;top:574.60px;font-size:13px;color:#000;letter-spacing:-0.061px;">Dodavatel - školení 6</span><span class="t" style="left:711.95px;top:574.60px;font-size:13px;color:#000;letter-spacing:0.065px;">45359326</span><span class="t" style="left:811.75px;top:574.60px;font-size:13px;color:#000;letter-spacing:-0.046px;">27. 5. 2025 6:14</span><span class="t" style="left:961.45px;top:574.60px;font-size:13px;color:#000;letter-spacing:-0.141px;">Otevřeno</span><svg style="position:absolute;left:1170.1000000000001px;top:575.8px;overflow:visible;" width="8.6" height="8.4" viewBox="0 0 8.6 8.4"><path d="M0.9,0.9 L7.7,7.5 M7.7,0.9 L0.9,7.5" stroke="#d01f23" stroke-width="2.1" fill="none"/></svg><svg style="position:absolute;left:1310.1000000000001px;top:575.8px;overflow:visible;" width="8.6" height="8.4" viewBox="0 0 8.6 8.4"><path d="M0.9,0.9 L7.7,7.5 M7.7,0.9 L0.9,7.5" stroke="#d01f23" stroke-width="2.1" fill="none"/></svg><svg style="position:absolute;left:1473.1000000000001px;top:575.8px;overflow:visible;" width="8.6" height="8.4" viewBox="0 0 8.6 8.4"><path d="M0.9,0.9 L7.7,7.5 M7.7,0.9 L0.9,7.5" stroke="#d01f23" stroke-width="2.1" fill="none"/></svg><div style="position:absolute;left:348px;top:618px;width:1222px;height:1px;background:#dedede;"></div><svg style="position:absolute;left:360px;top:603.9px;overflow:visible;" width="16.2" height="4.2" viewBox="0 0 16.2 4.2"><circle cx="2.1" cy="2.1" r="1.55" fill="none" stroke="#1d74b3" stroke-width="1.1"/><circle cx="8.1" cy="2.1" r="1.55" fill="none" stroke="#1d74b3" stroke-width="1.1"/><circle cx="14.1" cy="2.1" r="1.55" fill="none" stroke="#1d74b3" stroke-width="1.1"/></svg><svg style="position:absolute;left:386px;top:598px;overflow:visible;" width="16" height="16" viewBox="0 0 16 16"><circle cx="8" cy="8" r="7.4" fill="none" stroke="#1d74b3" stroke-width="1.1"/><circle cx="7.9" cy="4.6" r="0.8" fill="#1d74b3"/><path d="M6.9,6.9 H8.1 V10.6 Q8.1,11.4 9,11.3" fill="none" stroke="#1d74b3" stroke-width="1.1" stroke-linecap="round" stroke-linejoin="round"/></svg><span class="t" style="left:421.95px;top:599.60px;font-size:13px;color:#000;letter-spacing:-0.502px;">005</span><span class="t" style="left:501.45px;top:599.60px;font-size:13px;color:#000;letter-spacing:-0.061px;">Dodavatel - školení 8</span><span class="t" style="left:711.95px;top:599.60px;font-size:13px;color:#000;letter-spacing:0.065px;">12345678</span><span class="t" style="left:811.75px;top:599.60px;font-size:13px;color:#000;letter-spacing:-0.046px;">27. 5. 2025 6:16</span><span class="t" style="left:961.45px;top:599.60px;font-size:13px;color:#000;letter-spacing:-0.141px;">Otevřeno</span><svg style="position:absolute;left:1170.1000000000001px;top:600.8px;overflow:visible;" width="8.6" height="8.4" viewBox="0 0 8.6 8.4"><path d="M0.9,0.9 L7.7,7.5 M7.7,0.9 L0.9,7.5" stroke="#d01f23" stroke-width="2.1" fill="none"/></svg><svg style="position:absolute;left:1310.1000000000001px;top:600.8px;overflow:visible;" width="8.6" height="8.4" viewBox="0 0 8.6 8.4"><path d="M0.9,0.9 L7.7,7.5 M7.7,0.9 L0.9,7.5" stroke="#d01f23" stroke-width="2.1" fill="none"/></svg><svg style="position:absolute;left:1473.1000000000001px;top:600.8px;overflow:visible;" width="8.6" height="8.4" viewBox="0 0 8.6 8.4"><path d="M0.9,0.9 L7.7,7.5 M7.7,0.9 L0.9,7.5" stroke="#d01f23" stroke-width="2.1" fill="none"/></svg><div style="position:absolute;left:348px;top:643px;width:1222px;height:1px;background:#dedede;"></div><svg style="position:absolute;left:360px;top:628.9px;overflow:visible;" width="16.2" height="4.2" viewBox="0 0 16.2 4.2"><circle cx="2.1" cy="2.1" r="1.55" fill="none" stroke="#1d74b3" stroke-width="1.1"/><circle cx="8.1" cy="2.1" r="1.55" fill="none" stroke="#1d74b3" stroke-width="1.1"/><circle cx="14.1" cy="2.1" r="1.55" fill="none" stroke="#1d74b3" stroke-width="1.1"/></svg><svg style="position:absolute;left:386px;top:623px;overflow:visible;" width="16" height="16" viewBox="0 0 16 16"><circle cx="8" cy="8" r="7.4" fill="none" stroke="#1d74b3" stroke-width="1.1"/><circle cx="7.9" cy="4.6" r="0.8" fill="#1d74b3"/><path d="M6.9,6.9 H8.1 V10.6 Q8.1,11.4 9,11.3" fill="none" stroke="#1d74b3" stroke-width="1.1" stroke-linecap="round" stroke-linejoin="round"/></svg><span class="t" style="left:421.95px;top:624.60px;font-size:13px;color:#000;letter-spacing:-0.502px;">006</span><span class="t" style="left:501.45px;top:624.60px;font-size:13px;color:#000;letter-spacing:-0.061px;">Dodavatel - školení 8</span><span class="t" style="left:711.95px;top:624.60px;font-size:13px;color:#000;letter-spacing:0.065px;">12345678</span><span class="t" style="left:811.75px;top:624.60px;font-size:13px;color:#000;letter-spacing:-0.046px;">27. 5. 2025 6:19</span><span class="t" style="left:961.45px;top:624.60px;font-size:13px;color:#000;letter-spacing:-0.141px;">Otevřeno</span><svg style="position:absolute;left:1170.1000000000001px;top:625.8px;overflow:visible;" width="8.6" height="8.4" viewBox="0 0 8.6 8.4"><path d="M0.9,0.9 L7.7,7.5 M7.7,0.9 L0.9,7.5" stroke="#d01f23" stroke-width="2.1" fill="none"/></svg><svg style="position:absolute;left:1309.1000000000001px;top:625.8px;overflow:visible;" width="10.6" height="8.4" viewBox="0 0 10.6 8.4"><path d="M0.8,4.9 L3.9,7.6 L9.9,0.9" stroke="#2db42f" stroke-width="2.1" fill="none"/></svg><svg style="position:absolute;left:1473.1000000000001px;top:625.8px;overflow:visible;" width="8.6" height="8.4" viewBox="0 0 8.6 8.4"><path d="M0.9,0.9 L7.7,7.5 M7.7,0.9 L0.9,7.5" stroke="#d01f23" stroke-width="2.1" fill="none"/></svg>
<div style="position:absolute;left:330px;top:677px;width:1258px;height:480px;background:#fff;box-shadow:1px 1px 4px rgba(0,0,0,.14);"></div>
<span class="t b" style="left:341.60px;top:692.66px;font-size:18px;color:#343a40;letter-spacing:-0.735px;">Předběžné nabídky</span>
<div style="position:absolute;left:330px;top:718px;width:1258px;height:3px;background:linear-gradient(#0e69ad 0 1px,#1d75b4 1px 2px,#0e69ad 2px 3px);"></div>
<span class="t" style="left:731.15px;top:743.00px;font-size:13px;color:#666;letter-spacing:0.269px;">Lhůta:</span>
<div style="position:absolute;left:778px;top:741px;width:438px;height:21px;background:#f2f2f2;border:1px solid #cfcfcf;border-radius:4px;box-sizing:border-box;"></div><svg style="position:absolute;left:991px;top:745.3px;overflow:visible;" width="12" height="12" viewBox="0 0 12 12"><g fill="none" stroke="#9a9a9a" stroke-width="1"><rect x="0.5" y="1.7" width="11" height="9.8" rx="1"/><path d="M0.5,4.6 H11.5 M3.4,0 V3 M8.6,0 V3"/></g></svg><span class="t b" style="left:782.65px;top:745.00px;font-size:13px;color:#000;letter-spacing:0.114px;">27. 5. 2025</span><span class="t b" style="left:1010.75px;top:745.00px;font-size:13px;color:#000;letter-spacing:0.062px;">08:00</span>
<span class="t" style="left:640.85px;top:784.00px;font-size:13px;color:#666;letter-spacing:-0.151px;">Datum a čas otevírání:</span>
<div style="position:absolute;left:778px;top:782px;width:438px;height:21px;background:#f2f2f2;border:1px solid #cfcfcf;border-radius:4px;box-sizing:border-box;"></div><svg style="position:absolute;left:991px;top:786.3px;overflow:visible;" width="12" height="12" viewBox="0 0 12 12"><g fill="none" stroke="#9a9a9a" stroke-width="1"><rect x="0.5" y="1.7" width="11" height="9.8" rx="1"/><path d="M0.5,4.6 H11.5 M3.4,0 V3 M8.6,0 V3"/></g></svg>
<div style="position:absolute;left:778px;top:823px;width:438px;height:21px;background:#fff;border:1px solid #dcdcdc;border-radius:6px;box-sizing:border-box;box-shadow:0 1px 3px rgba(0,0,0,.16);"></div>
<span class="t" style="left:868.65px;top:827.80px;font-size:13px;color:#1d74b3;letter-spacing:-0.294px;">Odeslání výzvy k podání předběžných nabídek</span>
<span class="t b" style="left:777.75px;top:865.60px;font-size:13px;color:#fb0008;letter-spacing:-0.578px;">Některý z dodavatelů podal více než jednu předběžnou nabídku !</span>
<span class="t b" style="left:344.95px;top:903.10px;font-size:15px;color:#343a40;letter-spacing:-0.194px;">Přehled podaných předběžných nabídek</span>
<div style="position:absolute;left:345px;top:925px;width:1228px;height:204px;border:3px solid #dcdfe2;border-radius:9px;box-sizing:border-box;background:#fff;"></div><svg style="position:absolute;left:356px;top:940px;overflow:visible;" width="16" height="16" viewBox="0 0 16 16"><g fill="none" stroke="#1d74b3" stroke-width="1.2" stroke-linecap="round" stroke-linejoin="round"><path d="M4.2,3 H2.2 Q0.8,3 0.8,4.4 V14.4 Q0.8,15.8 2.2,15.8 H7"/><path d="M9.4,3 H11.4 Q12.8,3 12.8,4.4 V6.2"/><path d="M4.2,3.4 C4.2,0.2 9.4,0.2 9.4,3.4"/><path d="M3.6,6.8 H6.6 M3.6,9.5 H5.6 M3.6,12.2 H5.6" stroke-width="1.3"/><path d="M11.80,6.25 L13.48,8.10 L15.91,8.62 L15.15,11.00 L15.91,13.38 L13.48,13.90 L11.80,15.75 L10.13,13.90 L7.69,13.38 L8.45,11.00 L7.69,8.62 L10.12,8.10 Z" stroke-width="1.15"/></g><circle cx="6.8" cy="2.5" r="0.55" fill="#1d74b3"/><circle cx="11.8" cy="11" r="1.15" fill="#1d74b3"/></svg><span class="t" style="left:375.85px;top:941.60px;font-size:13px;color:#1d74b3;letter-spacing:-0.239px;">Evidovat předběžnou nabídku</span><div style="position:absolute;left:548px;top:939px;width:1px;height:18px;background:#1d74b3;"></div><div style="position:absolute;left:546px;top:929px;width:202px;height:36px;border:1px solid #e4122b;box-sizing:border-box;"></div><div style="position:absolute;left:556px;top:934.5px;width:189px;height:27px;background:#4cae4f;border:1px solid #8fd092;border-radius:6px;box-sizing:border-box;"></div><svg style="position:absolute;left:565.6px;top:940.6px;overflow:visible;" width="11.6" height="14.8" viewBox="0 0 11.6 14.8"><path d="M7.4,0.2 L0.6,8.4 H5.2 L3.8,14.6 L11,5.8 H6.2 Z" fill="#fff"/></svg><span class="t" style="left:582.50px;top:943.04px;font-size:12px;color:#fff;letter-spacing:-0.197px;text-shadow:0 0 0.4px #fff;">Odšifrovat předběžné nabídky</span><svg style="position:absolute;left:760.2px;top:939.7px;overflow:visible;" width="16" height="16" viewBox="0 0 16 16"><g fill="none" stroke="#1d74b3" stroke-width="1.2" stroke-linejoin="round" stroke-linecap="round"><path d="M3.4,4.4 V1.6 Q3.4,0.7 4.3,0.7 H11.7 Q12.6,0.7 12.6,1.6 V4.4"/><path d="M3.4,11.6 H1.9 Q0.7,11.6 0.7,10.4 V5.8 Q0.7,4.6 1.9,4.6 H14.1 Q15.3,4.6 15.3,5.8 V10.4 Q15.3,11.6 14.1,11.6 H12.6"/><path d="M3.4,8.6 H12.6 V14.6 Q12.6,15.4 11.8,15.4 H4.2 Q3.4,15.4 3.4,14.6 Z"/><path d="M5.4,10.8 H10.6 M5.4,12.9 H9" stroke-width="1.1"/><path d="M2.6,6.8 H3.6" stroke-width="1.2"/></g></svg><svg style="position:absolute;left:780.6px;top:945.3px;overflow:visible;" width="7.5" height="6.1" viewBox="0 0 7.5 6.1"><path d="M0.7,0.6 H6.8 L3.75,5.5 Z" fill="none" stroke="#1d74b3" stroke-width="1.25" stroke-linejoin="round"/></svg><div style="position:absolute;left:799px;top:939px;width:1px;height:18px;background:#1d74b3;"></div><svg style="position:absolute;left:810px;top:939.7px;overflow:visible;" width="13" height="16" viewBox="0 0 13 16"><g fill="none" stroke="#1d74b3" stroke-width="1.2" stroke-linejoin="round" stroke-linecap="round"><path d="M3.8,5.6 H1.8 Q0.7,5.6 0.7,6.7 V14.3 Q0.7,15.4 1.8,15.4 H11.2 Q12.3,15.4 12.3,14.3 V6.7 Q12.3,5.6 11.2,5.6 H9.2"/><path d="M6.5,8.2 V0.8 M3.9,3.3 L6.5,0.7 L9.1,3.3"/></g></svg><svg style="position:absolute;left:828.8px;top:945.3px;overflow:visible;" width="7.5" height="6.1" viewBox="0 0 7.5 6.1"><path d="M0.7,0.6 H6.8 L3.75,5.5 Z" fill="none" stroke="#1d74b3" stroke-width="1.25" stroke-linejoin="round"/></svg><div style="position:absolute;left:847px;top:939px;width:1px;height:18px;background:#1d74b3;"></div><svg style="position:absolute;left:1488.6px;top:940px;overflow:visible;" width="16.4" height="15.6" viewBox="0 0 16.4 15.6"><path d="M1,0.7 H15.4 Q16,0.7 15.8,1.4 C14.6,5.2 12.4,7 9.8,8 V13.2 L6.9,15 Q6.6,15.1 6.6,14.7 V8 C4,7 1.8,5.2 0.6,1.4 Q0.4,0.7 1,0.7 Z" fill="none" stroke="#1d74b3" stroke-width="1.2" stroke-linejoin="round"/></svg><div style="position:absolute;left:1512px;top:939px;width:1px;height:18px;background:#1d74b3;"></div><svg style="position:absolute;left:1524.7px;top:945.3px;overflow:visible;" width="7.5" height="6.1" viewBox="0 0 7.5 6.1"><path d="M0.7,0.6 H6.8 L3.75,5.5 Z" fill="none" stroke="#1d74b3" stroke-width="1.25" stroke-linejoin="round"/></svg><span class="t" style="left:1540.47px;top:944.82px;font-size:12.5px;color:#1d74b3;letter-spacing:0.552px;">Vše</span><div style="position:absolute;left:1569px;top:939px;width:1px;height:18px;background:#1d74b3;"></div><div style="position:absolute;left:348px;top:967px;width:1221px;height:1px;background:#e6e6e6;"></div><div style="position:absolute;left:348px;top:968px;width:1221px;height:32px;background:#f2f2f2;"></div><div style="position:absolute;left:348px;top:1000px;width:1221px;height:1px;background:#d2d2d2;"></div><div style="position:absolute;left:413px;top:968px;width:1px;height:32px;background:#d6d6d6;"></div><div style="position:absolute;left:493px;top:968px;width:1px;height:32px;background:#d6d6d6;"></div><div style="position:absolute;left:696px;top:968px;width:1px;height:32px;background:#d6d6d6;"></div><div style="position:absolute;left:796px;top:968px;width:1px;height:32px;background:#d6d6d6;"></div><div style="position:absolute;left:936px;top:968px;width:1px;height:32px;background:#d6d6d6;"></div><div style="position:absolute;left:1116px;top:968px;width:1px;height:32px;background:#d6d6d6;"></div><div style="position:absolute;left:1246px;top:968px;width:1px;height:32px;background:#d6d6d6;"></div><div style="position:absolute;left:1376px;top:968px;width:1px;height:32px;background:#d6d6d6;"></div><div style="position:absolute;left:1569px;top:968px;width:1px;height:32px;background:#d6d6d6;"></div><svg style="position:absolute;left:373px;top:976.0px;overflow:visible;" width="16" height="16" viewBox="0 0 16 16"><g fill="none" stroke="#555" stroke-width="1.1"><rect x="0.55" y="0.55" width="14.9" height="14.9" rx="1.2"/><path d="M3,5.4 H9.6 M12.4,5.4 H12.8 M3,10.6 H5.4 M8.2,10.6 H12.8"/><circle cx="11" cy="5.4" r="1.4" fill="#fff"/><circle cx="6.8" cy="10.6" r="1.4" fill="#fff"/></g></svg><span class="t b" style="left:421.65px;top:977.80px;font-size:13px;color:#000;letter-spacing:-0.599px;">Číslo</span><svg style="position:absolute;left:457.6px;top:978.3px;overflow:visible;" width="11.2" height="12" viewBox="0 0 11.2 12"><path d="M5.6,12 V1 M0.7,6 L5.6,1 L10.5,6" fill="none" stroke="#000" stroke-width="1.25"/></svg><svg style="position:absolute;left:476.4px;top:981.0999999999999px;overflow:visible;" width="7.5" height="6" viewBox="0 0 7.5 6"><path d="M0.7,0.6 H6.8 L3.75,5.4 Z" fill="none" stroke="#444" stroke-width="1.1" stroke-linejoin="round"/></svg><span class="t" style="left:501.65px;top:977.80px;font-size:13px;color:#666;letter-spacing:-0.212px;">Název dodavatele</span><svg style="position:absolute;left:679.6px;top:981.0999999999999px;overflow:visible;" width="7.5" height="6" viewBox="0 0 7.5 6"><path d="M0.7,0.6 H6.8 L3.75,5.4 Z" fill="none" stroke="#444" stroke-width="1.1" stroke-linejoin="round"/></svg><span class="t" style="left:704.45px;top:977.80px;font-size:13px;color:#666;letter-spacing:-0.963px;">IČO</span><svg style="position:absolute;left:779.1px;top:981.0999999999999px;overflow:visible;" width="7.5" height="6" viewBox="0 0 7.5 6"><path d="M0.7,0.6 H6.8 L3.75,5.4 Z" fill="none" stroke="#444" stroke-width="1.1" stroke-linejoin="round"/></svg><span class="t" style="left:804.45px;top:977.80px;font-size:13px;color:#666;letter-spacing:-0.207px;">Datum podání</span><svg style="position:absolute;left:919.8px;top:981.0999999999999px;overflow:visible;" width="7.5" height="6" viewBox="0 0 7.5 6"><path d="M0.7,0.6 H6.8 L3.75,5.4 Z" fill="none" stroke="#444" stroke-width="1.1" stroke-linejoin="round"/></svg><span class="t" style="left:944.55px;top:977.80px;font-size:13px;color:#666;letter-spacing:0.161px;">Stav</span><svg style="position:absolute;left:1099.8px;top:981.0999999999999px;overflow:visible;" width="7.5" height="6" viewBox="0 0 7.5 6"><path d="M0.7,0.6 H6.8 L3.75,5.4 Z" fill="none" stroke="#444" stroke-width="1.1" stroke-linejoin="round"/></svg><span class="t" style="left:1124.45px;top:977.80px;font-size:13px;color:#666;letter-spacing:-0.115px;">Podaná po lhůtě</span><svg style="position:absolute;left:1229.5px;top:981.0999999999999px;overflow:visible;" width="7.5" height="6" viewBox="0 0 7.5 6"><path d="M0.7,0.6 H6.8 L3.75,5.4 Z" fill="none" stroke="#444" stroke-width="1.1" stroke-linejoin="round"/></svg><span class="t" style="left:1254.45px;top:977.80px;font-size:13px;color:#666;letter-spacing:-0.029px;">Listinná podoba</span><svg style="position:absolute;left:1359.5px;top:981.0999999999999px;overflow:visible;" width="7.5" height="6" viewBox="0 0 7.5 6"><path d="M0.7,0.6 H6.8 L3.75,5.4 Z" fill="none" stroke="#444" stroke-width="1.1" stroke-linejoin="round"/></svg><span class="t" style="left:1384.45px;top:977.80px;font-size:13px;color:#666;letter-spacing:-0.237px;">Označena jako nepodaná</span><svg style="position:absolute;left:1552.8px;top:981.0999999999999px;overflow:visible;" width="7.5" height="6" viewBox="0 0 7.5 6"><path d="M0.7,0.6 H6.8 L3.75,5.4 Z" fill="none" stroke="#444" stroke-width="1.1" stroke-linejoin="round"/></svg><div style="position:absolute;left:348px;top:1025px;width:1222px;height:1px;background:#dedede;"></div><svg style="position:absolute;left:360px;top:1010.9px;overflow:visible;" width="16.2" height="4.2" viewBox="0 0 16.2 4.2"><circle cx="2.1" cy="2.1" r="1.55" fill="none" stroke="#1d74b3" stroke-width="1.1"/><circle cx="8.1" cy="2.1" r="1.55" fill="none" stroke="#1d74b3" stroke-width="1.1"/><circle cx="14.1" cy="2.1" r="1.55" fill="none" stroke="#1d74b3" stroke-width="1.1"/></svg><svg style="position:absolute;left:386px;top:1005px;overflow:visible;" width="16" height="16" viewBox="0 0 16 16"><circle cx="8" cy="8" r="7.4" fill="none" stroke="#1d74b3" stroke-width="1.1"/><circle cx="7.9" cy="4.6" r="0.8" fill="#1d74b3"/><path d="M6.9,6.9 H8.1 V10.6 Q8.1,11.4 9,11.3" fill="none" stroke="#1d74b3" stroke-width="1.1" stroke-linecap="round" stroke-linejoin="round"/></svg><span class="t" style="left:421.95px;top:1006.60px;font-size:13px;color:#000;letter-spacing:-0.502px;">001</span><span class="t" style="left:501.45px;top:1006.60px;font-size:13px;color:#000;letter-spacing:-0.061px;">Dodavatel - školení 2</span><span class="t" style="left:704.45px;top:1006.60px;font-size:13px;color:#000;letter-spacing:0.065px;">12345678</span><span class="t" style="left:804.45px;top:1006.60px;font-size:13px;color:#000;letter-spacing:-0.046px;">27. 5. 2025 7:55</span><span class="t" style="left:944.65px;top:1006.60px;font-size:13px;color:#000;letter-spacing:-0.121px;">Otevírání zahájeno</span><svg style="position:absolute;left:1178.3px;top:1007.8px;overflow:visible;" width="8.6" height="8.4" viewBox="0 0 8.6 8.4"><path d="M0.9,0.9 L7.7,7.5 M7.7,0.9 L0.9,7.5" stroke="#d01f23" stroke-width="2.1" fill="none"/></svg><svg style="position:absolute;left:1308.3px;top:1007.8px;overflow:visible;" width="8.6" height="8.4" viewBox="0 0 8.6 8.4"><path d="M0.9,0.9 L7.7,7.5 M7.7,0.9 L0.9,7.5" stroke="#d01f23" stroke-width="2.1" fill="none"/></svg><svg style="position:absolute;left:1469.5px;top:1007.8px;overflow:visible;" width="8.6" height="8.4" viewBox="0 0 8.6 8.4"><path d="M0.9,0.9 L7.7,7.5 M7.7,0.9 L0.9,7.5" stroke="#d01f23" stroke-width="2.1" fill="none"/></svg><div style="position:absolute;left:348px;top:1050px;width:1222px;height:1px;background:#dedede;"></div><svg style="position:absolute;left:360px;top:1035.9px;overflow:visible;" width="16.2" height="4.2" viewBox="0 0 16.2 4.2"><circle cx="2.1" cy="2.1" r="1.55" fill="none" stroke="#1d74b3" stroke-width="1.1"/><circle cx="8.1" cy="2.1" r="1.55" fill="none" stroke="#1d74b3" stroke-width="1.1"/><circle cx="14.1" cy="2.1" r="1.55" fill="none" stroke="#1d74b3" stroke-width="1.1"/></svg><svg style="position:absolute;left:386px;top:1030px;overflow:visible;" width="16" height="16" viewBox="0 0 16 16"><circle cx="8" cy="8" r="7.4" fill="none" stroke="#1d74b3" stroke-width="1.1"/><circle cx="7.9" cy="4.6" r="0.8" fill="#1d74b3"/><path d="M6.9,6.9 H8.1 V10.6 Q8.1,11.4 9,11.3" fill="none" stroke="#1d74b3" stroke-width="1.1" stroke-linecap="round" stroke-linejoin="round"/></svg><span class="t" style="left:421.95px;top:1031.60px;font-size:13px;color:#000;letter-spacing:-0.502px;">002</span><span class="t" style="left:501.45px;top:1031.60px;font-size:13px;color:#000;letter-spacing:-0.061px;">Dodavatel - školení 3</span><span class="t" style="left:704.45px;top:1031.60px;font-size:13px;color:#000;letter-spacing:0.065px;">12345678</span><span class="t" style="left:804.45px;top:1031.60px;font-size:13px;color:#000;letter-spacing:-0.046px;">27. 5. 2025 7:56</span><span class="t" style="left:944.65px;top:1031.60px;font-size:13px;color:#000;letter-spacing:-0.121px;">Otevírání zahájeno</span><svg style="position:absolute;left:1178.3px;top:1032.8px;overflow:visible;" width="8.6" height="8.4" viewBox="0 0 8.6 8.4"><path d="M0.9,0.9 L7.7,7.5 M7.7,0.9 L0.9,7.5" stroke="#d01f23" stroke-width="2.1" fill="none"/></svg><svg style="position:absolute;left:1308.3px;top:1032.8px;overflow:visible;" width="8.6" height="8.4" viewBox="0 0 8.6 8.4"><path d="M0.9,0.9 L7.7,7.5 M7.7,0.9 L0.9,7.5" stroke="#d01f23" stroke-width="2.1" fill="none"/></svg><svg style="position:absolute;left:1469.5px;top:1032.8px;overflow:visible;" width="8.6" height="8.4" viewBox="0 0 8.6 8.4"><path d="M0.9,0.9 L7.7,7.5 M7.7,0.9 L0.9,7.5" stroke="#d01f23" stroke-width="2.1" fill="none"/></svg><div style="position:absolute;left:348px;top:1075px;width:1222px;height:1px;background:#dedede;"></div><svg style="position:absolute;left:360px;top:1060.9px;overflow:visible;" width="16.2" height="4.2" viewBox="0 0 16.2 4.2"><circle cx="2.1" cy="2.1" r="1.55" fill="none" stroke="#1d74b3" stroke-width="1.1"/><circle cx="8.1" cy="2.1" r="1.55" fill="none" stroke="#1d74b3" stroke-width="1.1"/><circle cx="14.1" cy="2.1" r="1.55" fill="none" stroke="#1d74b3" stroke-width="1.1"/></svg><svg style="position:absolute;left:386px;top:1055px;overflow:visible;" width="16" height="16" viewBox="0 0 16 16"><circle cx="8" cy="8" r="7.4" fill="none" stroke="#1d74b3" stroke-width="1.1"/><circle cx="7.9" cy="4.6" r="0.8" fill="#1d74b3"/><path d="M6.9,6.9 H8.1 V10.6 Q8.1,11.4 9,11.3" fill="none" stroke="#1d74b3" stroke-width="1.1" stroke-linecap="round" stroke-linejoin="round"/></svg><span class="t" style="left:421.95px;top:1056.60px;font-size:13px;color:#000;letter-spacing:-0.502px;">003</span><span class="t" style="left:501.45px;top:1056.60px;font-size:13px;color:#000;letter-spacing:-0.061px;">Dodavatel - školení 6</span><span class="t" style="left:704.45px;top:1056.60px;font-size:13px;color:#000;letter-spacing:0.065px;">45359326</span><span class="t" style="left:804.45px;top:1056.60px;font-size:13px;color:#000;letter-spacing:-0.046px;">27. 5. 2025 7:57</span><span class="t" style="left:944.65px;top:1056.60px;font-size:13px;color:#000;letter-spacing:-0.121px;">Otevírání zahájeno</span><svg style="position:absolute;left:1178.3px;top:1057.8px;overflow:visible;" width="8.6" height="8.4" viewBox="0 0 8.6 8.4"><path d="M0.9,0.9 L7.7,7.5 M7.7,0.9 L0.9,7.5" stroke="#d01f23" stroke-width="2.1" fill="none"/></svg><svg style="position:absolute;left:1308.3px;top:1057.8px;overflow:visible;" width="8.6" height="8.4" viewBox="0 0 8.6 8.4"><path d="M0.9,0.9 L7.7,7.5 M7.7,0.9 L0.9,7.5" stroke="#d01f23" stroke-width="2.1" fill="none"/></svg><svg style="position:absolute;left:1469.5px;top:1057.8px;overflow:visible;" width="8.6" height="8.4" viewBox="0 0 8.6 8.4"><path d="M0.9,0.9 L7.7,7.5 M7.7,0.9 L0.9,7.5" stroke="#d01f23" stroke-width="2.1" fill="none"/></svg><div style="position:absolute;left:348px;top:1100px;width:1222px;height:1px;background:#dedede;"></div><svg style="position:absolute;left:360px;top:1085.9px;overflow:visible;" width="16.2" height="4.2" viewBox="0 0 16.2 4.2"><circle cx="2.1" cy="2.1" r="1.55" fill="none" stroke="#1d74b3" stroke-width="1.1"/><circle cx="8.1" cy="2.1" r="1.55" fill="none" stroke="#1d74b3" stroke-width="1.1"/><circle cx="14.1" cy="2.1" r="1.55" fill="none" stroke="#1d74b3" stroke-width="1.1"/></svg><svg style="position:absolute;left:386px;top:1080px;overflow:visible;" width="16" height="16" viewBox="0 0 16 16"><circle cx="8" cy="8" r="7.4" fill="none" stroke="#1d74b3" stroke-width="1.1"/><circle cx="7.9" cy="4.6" r="0.8" fill="#1d74b3"/><path d="M6.9,6.9 H8.1 V10.6 Q8.1,11.4 9,11.3" fill="none" stroke="#1d74b3" stroke-width="1.1" stroke-linecap="round" stroke-linejoin="round"/></svg><span class="t" style="left:421.95px;top:1081.60px;font-size:13px;color:#000;letter-spacing:-0.502px;">004</span><span class="t" style="left:501.45px;top:1081.60px;font-size:13px;color:#000;letter-spacing:-0.061px;">Dodavatel - školení 8</span><span class="t" style="left:704.45px;top:1081.60px;font-size:13px;color:#000;letter-spacing:0.065px;">12345678</span><span class="t" style="left:804.45px;top:1081.60px;font-size:13px;color:#000;letter-spacing:-0.046px;">27. 5. 2025 7:57</span><span class="t" style="left:944.65px;top:1081.60px;font-size:13px;color:#000;letter-spacing:-0.121px;">Otevírání zahájeno</span><svg style="position:absolute;left:1178.3px;top:1082.8px;overflow:visible;" width="8.6" height="8.4" viewBox="0 0 8.6 8.4"><path d="M0.9,0.9 L7.7,7.5 M7.7,0.9 L0.9,7.5" stroke="#d01f23" stroke-width="2.1" fill="none"/></svg><svg style="position:absolute;left:1308.3px;top:1082.8px;overflow:visible;" width="8.6" height="8.4" viewBox="0 0 8.6 8.4"><path d="M0.9,0.9 L7.7,7.5 M7.7,0.9 L0.9,7.5" stroke="#d01f23" stroke-width="2.1" fill="none"/></svg><svg style="position:absolute;left:1469.5px;top:1082.8px;overflow:visible;" width="8.6" height="8.4" viewBox="0 0 8.6 8.4"><path d="M0.9,0.9 L7.7,7.5 M7.7,0.9 L0.9,7.5" stroke="#d01f23" stroke-width="2.1" fill="none"/></svg><div style="position:absolute;left:348px;top:1125px;width:1222px;height:1px;background:#dedede;"></div><svg style="position:absolute;left:360px;top:1110.9px;overflow:visible;" width="16.2" height="4.2" viewBox="0 0 16.2 4.2"><circle cx="2.1" cy="2.1" r="1.55" fill="none" stroke="#1d74b3" stroke-width="1.1"/><circle cx="8.1" cy="2.1" r="1.55" fill="none" stroke="#1d74b3" stroke-width="1.1"/><circle cx="14.1" cy="2.1" r="1.55" fill="none" stroke="#1d74b3" stroke-width="1.1"/></svg><svg style="position:absolute;left:386px;top:1105px;overflow:visible;" width="16" height="16" viewBox="0 0 16 16"><circle cx="8" cy="8" r="7.4" fill="none" stroke="#1d74b3" stroke-width="1.1"/><circle cx="7.9" cy="4.6" r="0.8" fill="#1d74b3"/><path d="M6.9,6.9 H8.1 V10.6 Q8.1,11.4 9,11.3" fill="none" stroke="#1d74b3" stroke-width="1.1" stroke-linecap="round" stroke-linejoin="round"/></svg><span class="t" style="left:421.95px;top:1106.60px;font-size:13px;color:#000;letter-spacing:-0.502px;">005</span><span class="t" style="left:501.45px;top:1106.60px;font-size:13px;color:#000;letter-spacing:-0.061px;">Dodavatel - školení 8</span><span class="t" style="left:704.45px;top:1106.60px;font-size:13px;color:#000;letter-spacing:0.065px;">12345678</span><span class="t" style="left:804.45px;top:1106.60px;font-size:13px;color:#000;letter-spacing:-0.046px;">27. 5. 2025 7:59</span><span class="t" style="left:944.65px;top:1106.60px;font-size:13px;color:#000;letter-spacing:-0.121px;">Otevírání zahájeno</span><svg style="position:absolute;left:1178.3px;top:1107.8px;overflow:visible;" width="8.6" height="8.4" viewBox="0 0 8.6 8.4"><path d="M0.9,0.9 L7.7,7.5 M7.7,0.9 L0.9,7.5" stroke="#d01f23" stroke-width="2.1" fill="none"/></svg><svg style="position:absolute;left:1307.3px;top:1107.8px;overflow:visible;" width="10.6" height="8.4" viewBox="0 0 10.6 8.4"><path d="M0.8,4.9 L3.9,7.6 L9.9,0.9" stroke="#2db42f" stroke-width="2.1" fill="none"/></svg><svg style="position:absolute;left:1469.5px;top:1107.8px;overflow:visible;" width="8.6" height="8.4" viewBox="0 0 8.6 8.4"><path d="M0.9,0.9 L7.7,7.5 M7.7,0.9 L0.9,7.5" stroke="#d01f23" stroke-width="2.1" fill="none"/></svg>
</body></html>
